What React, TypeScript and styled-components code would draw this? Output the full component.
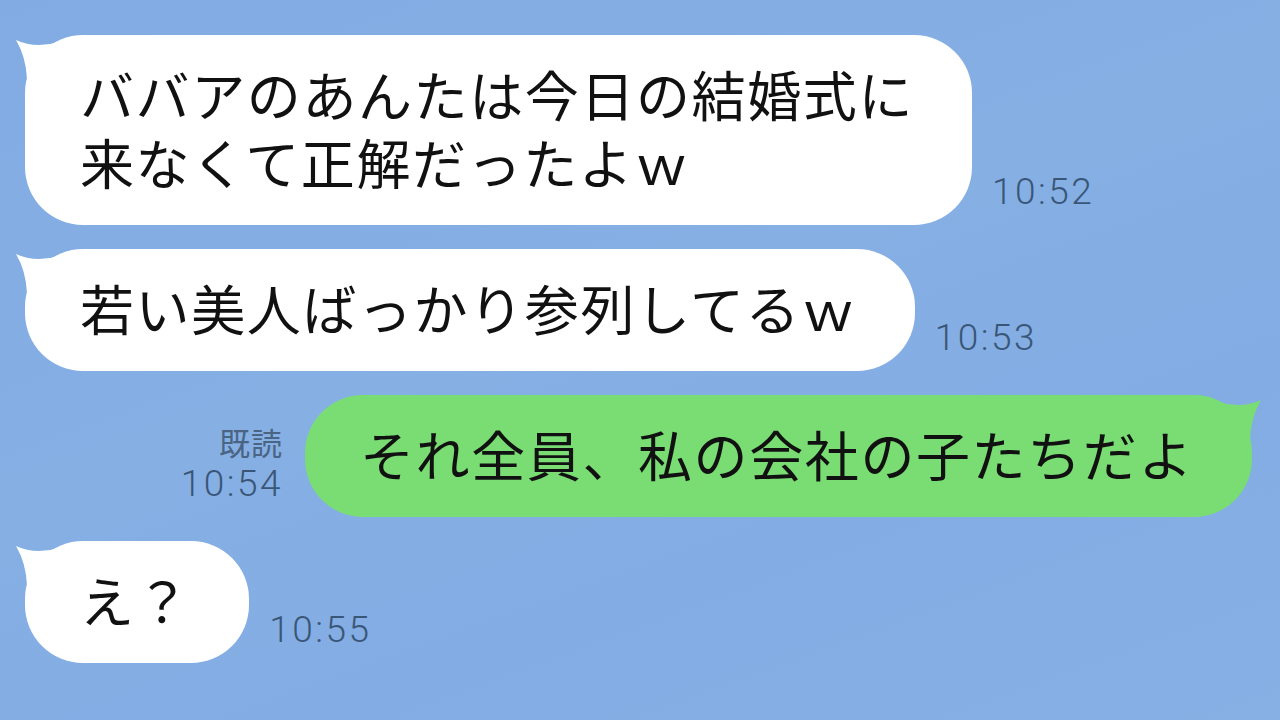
import styled, { createGlobalStyle } from 'styled-components';

const GlobalStyle = createGlobalStyle`
  html, body {
    margin: 0;
    padding: 0;
  }
  body {
    width: 1280px;
    height: 720px;
    overflow: hidden;
    background: #83ade3;
  }
`;

const Screen = styled.div`
  width: 1280px;
  height: 720px;
  box-sizing: border-box;
  padding: 35px 28px 0 25px;
  display: flex;
  flex-direction: column;
  gap: 24px;
  background: linear-gradient(160deg, #81abe2 0%, #86b0e4 45%, #82ace3 70%, #87b1e5 100%);
  font-family: 'Noto Sans CJK JP', 'Noto Sans', sans-serif;
`;

const Row = styled.div<{ $mine?: boolean }>`
  display: flex;
  align-items: flex-end;
  justify-content: ${(p) => (p.$mine ? 'flex-end' : 'flex-start')};
  gap: ${(p) => (p.$mine ? '22px' : '20px')};
`;

const Bubble = styled.div<{ $mine?: boolean }>`
  position: relative;
  background: ${(p) => (p.$mine ? '#79dd74' : '#ffffff')};
  color: #111;
  border-radius: 58px;
  padding: 25px 58px 29px 55px;
  font-size: 54px;
  line-height: 68px;
  letter-spacing: 1.6px;
  white-space: nowrap;
`;

const Line = styled.div``;

const Tail = styled.svg<{ $mine?: boolean }>`
  position: absolute;
  top: 0;
  width: 60px;
  height: 50px;
  ${(p) => (p.$mine ? 'right: -12px; transform: scaleX(-1);' : 'left: -12px;')}
`;

const Meta = styled.div`
  display: flex;
  flex-direction: column;
  align-items: flex-end;
  margin-bottom: 14px;
  color: #3c5878;
`;

const Read = styled.span`
  font-size: 31px;
  line-height: 46px;
  letter-spacing: 1px;
  font-family: 'Noto Sans CJK JP', sans-serif;
  color: #4a6483;
`;

const Time = styled.span`
  font-family: Roboto, 'Liberation Sans', sans-serif;
  font-weight: 300;
  font-size: 37px;
  line-height: 38px;
  letter-spacing: 2.5px;
  color: #3a5677;
`;

function BubbleTail({ mine, color }: { mine?: boolean; color: string }) {
  return (
    <Tail $mine={mine} viewBox="0 0 60 50">
      <path d="M3 5 Q22 14 46 7 L52 40 L14 44 Q13 22 3 5 Z" fill={color} />
    </Tail>
  );
}

function Incoming({ lines, time }: { lines: string[]; time: string }) {
  return (
    <Row>
      <Bubble>
        <BubbleTail color="#ffffff" />
        {lines.map((l, i) => (
          <Line key={i}>{l}</Line>
        ))}
      </Bubble>
      <Meta>
        <Time>{time}</Time>
      </Meta>
    </Row>
  );
}

function Outgoing({ text, time }: { text: string; time: string }) {
  return (
    <Row $mine>
      <Meta>
        <Read>既読</Read>
        <Time>{time}</Time>
      </Meta>
      <Bubble $mine>
        <BubbleTail mine color="#79dd74" />
        <Line>{text}</Line>
      </Bubble>
    </Row>
  );
}

export default function App() {
  return (
    <>
      <GlobalStyle />
      <Screen>
        <Incoming lines={['ババアのあんたは今日の結婚式に', '来なくて正解だったよｗ']} time="10:52" />
        <Incoming lines={['若い美人ばっかり参列してるｗ']} time="10:53" />
        <Outgoing text="それ全員、私の会社の子たちだよ" time="10:54" />
        <Incoming lines={['え？']} time="10:55" />
      </Screen>
    </>
  );
}
